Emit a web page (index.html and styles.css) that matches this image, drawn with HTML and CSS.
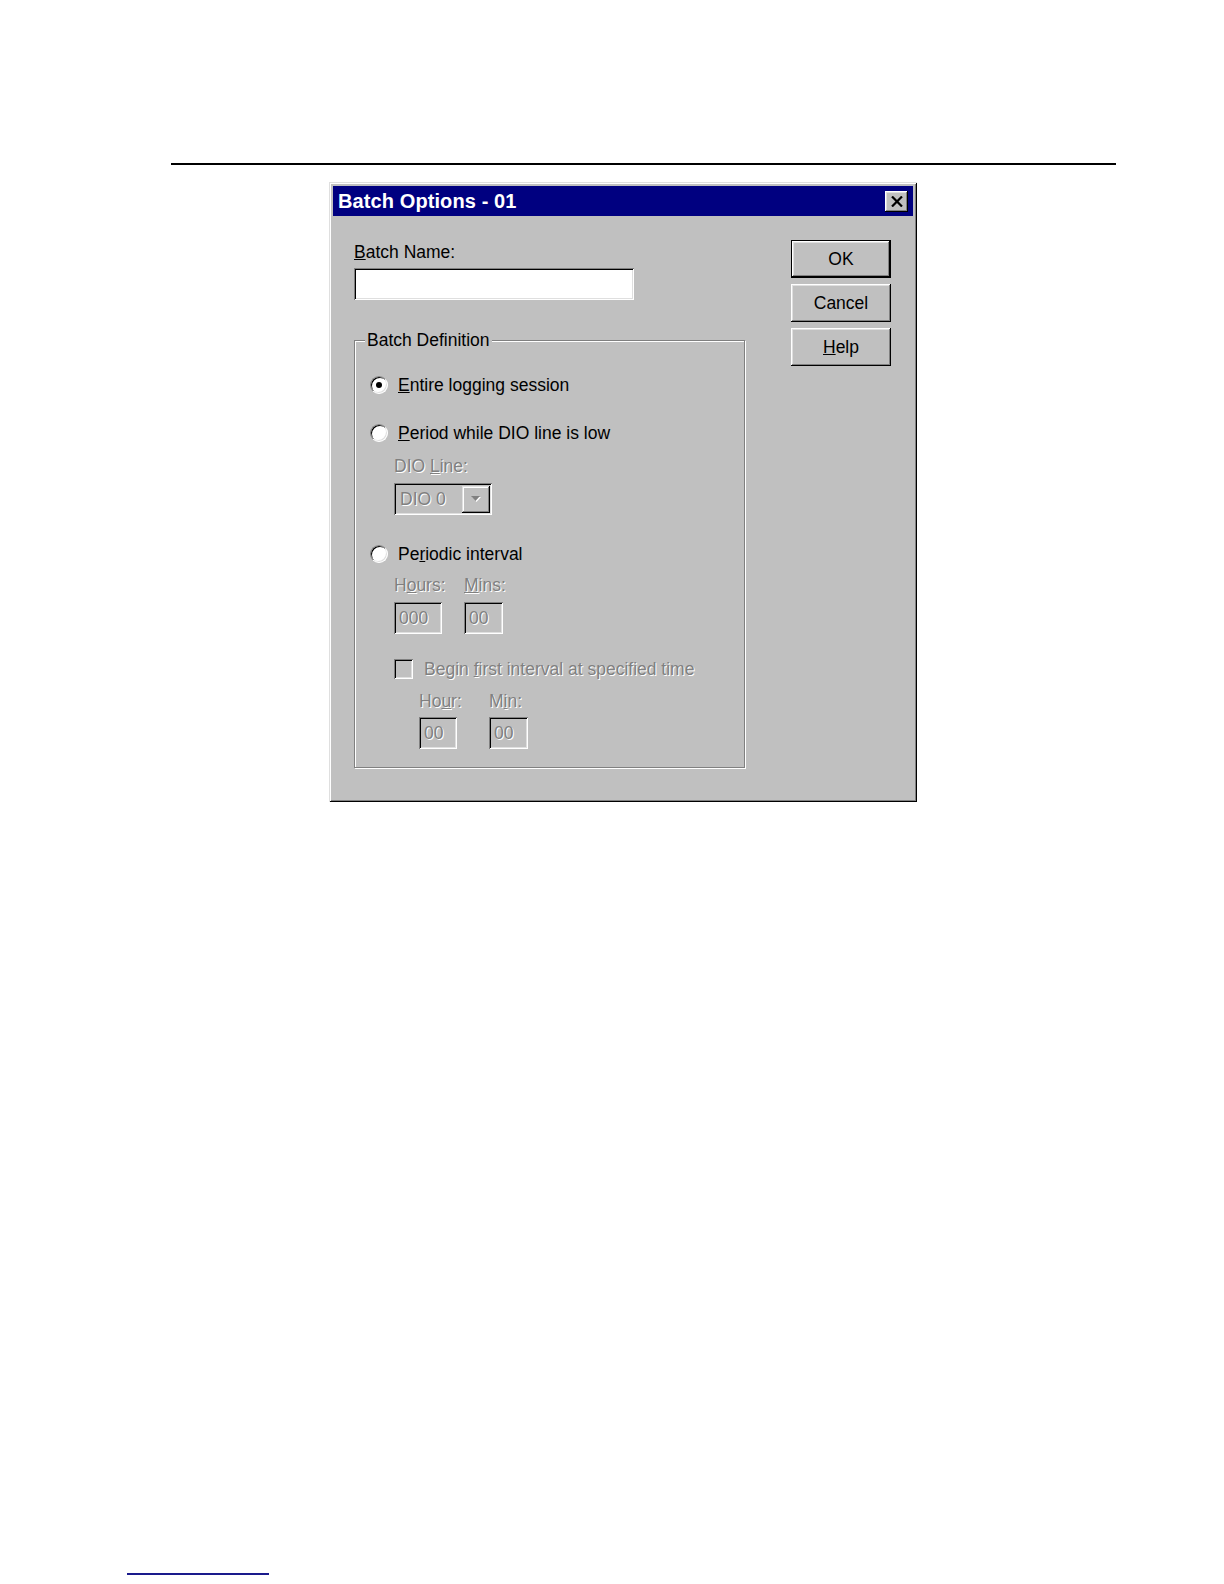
FILE: index.html
```html
<!DOCTYPE html>
<html lang="en">
<head>
<meta charset="utf-8">
<title>Batch Options - 01</title>
<link rel="stylesheet" href="styles.css">
</head>
<body>
<div class="page">
  <div class="rule"></div>

  <div class="dialog">
    <div class="titlebar">
      <span class="title">Batch Options - 01</span>
      <span class="close-btn">
        <svg width="12" height="11" viewBox="0 0 12 11"><path d="M1 0.5 L11 10.5 M11 0.5 L1 10.5" stroke="#000" stroke-width="2.2" fill="none"/></svg>
      </span>
    </div>

    <div class="body">
      <div class="main">
        <div class="lbl"><u>B</u>atch Name:</div>
        <div class="edit"></div>

        <fieldset class="group">
          <legend>Batch Definition</legend>

          <div class="opt-row row-entire">
            <span class="radio checked"></span>
            <span><u>E</u>ntire logging session</span>
          </div>

          <div class="opt-row row-period">
            <span class="radio"></span>
            <span><u>P</u>eriod while DIO line is low</span>
          </div>

          <div class="indent dis lbl-dio">DIO <u>L</u>ine:</div>
          <div class="indent combo">
            <span class="combo-text dis">DIO 0</span>
            <span class="combo-btn">
              <svg width="12" height="8" viewBox="0 0 12 8"><path d="M2 2 H11 L6.5 7 Z" fill="#fff"/><path d="M1 1 H10 L5.5 6 Z" fill="#808080"/></svg>
            </span>
          </div>

          <div class="opt-row row-periodic">
            <span class="radio"></span>
            <span>Pe<u>r</u>iodic interval</span>
          </div>

          <div class="indent timegrid grid-hours">
            <span class="dis">H<u>o</u>urs:</span>
            <span class="dis"><u>M</u>ins:</span>
            <span class="field f-hours dis">000</span>
            <span class="field f-mins dis">00</span>
          </div>

          <div class="indent check-row">
            <span class="check"></span>
            <span class="dis">Begin <u>f</u>irst interval at specified time</span>
          </div>

          <div class="indent2 timegrid grid-hour">
            <span class="dis">Ho<u>u</u>r:</span>
            <span class="dis">M<u>i</u>n:</span>
            <span class="field f-hour dis">00</span>
            <span class="field f-min dis">00</span>
          </div>
        </fieldset>
      </div>

      <div class="buttons">
        <div class="btn default">OK</div>
        <div class="btn">Cancel</div>
        <div class="btn"><u>H</u>elp</div>
      </div>
    </div>
  </div>

  <div class="footline"></div>
</div>
</body>
</html>
```

FILE: styles.css
```css
html, body {
  margin: 0;
  padding: 0;
  background: #ffffff;
  overflow: hidden;
}

.page {
  width: 1224px;
  height: 1584px;
  overflow: hidden;
  padding-top: 163px;
  box-sizing: border-box;
  font-family: "Liberation Sans", Arial, sans-serif;
  font-size: 17.5px;
  color: #000;
}

.rule {
  margin-left: 171px;
  width: 945px;
  height: 2px;
  background: #000;
}

/* ---------- dialog window ---------- */
.dialog {
  margin: 17px 0 0 329px;
  width: 588px;
  box-sizing: border-box;
  padding: 4px;
  background: #c0c0c0;
  box-shadow:
    inset 1px 1px 0 #dfdfdf,
    inset -1px -1px 0 #000,
    inset 2px 2px 0 #ffffff,
    inset -2px -2px 0 #808080;
}

.titlebar {
  height: 30px;
  background: #000080;
  display: flex;
  align-items: center;
  justify-content: space-between;
  padding: 0 5px 0 5px;
}

.title {
  color: #fff;
  font-weight: bold;
  font-size: 20px;
  letter-spacing: 0.1px;
}

.close-btn {
  width: 23px;
  height: 21px;
  background: #c0c0c0;
  display: flex;
  align-items: center;
  justify-content: center;
  box-shadow:
    inset -1px -1px 0 #000,
    inset 1px 1px 0 #fff,
    inset -2px -2px 0 #808080,
    inset 2px 2px 0 #dfdfdf;
}

.body {
  display: flex;
  padding: 24px 0 30px 21px;
}

.main {
  width: 391px;
  margin-top: 2px;
}

.lbl {
  line-height: 20px;
  height: 20px;
}

.edit {
  margin-top: 6px;
  width: 280px;
  height: 32px;
  background: #fff;
  box-shadow:
    inset 1px 1px 0 #808080,
    inset -1px -1px 0 #fff,
    inset 2px 2px 0 #000,
    inset -2px -2px 0 #dfdfdf;
}

/* ---------- group box ---------- */
.group {
  margin: 30px 0 0 0;
  width: 391px;
  box-sizing: border-box;
  min-width: 0;
  padding: 0 0 18px 15px;
  border: 1px solid #808080;
  box-shadow: inset 1px 1px 0 #fff, 1px 1px 0 #fff;
}

.group legend {
  margin-left: -5px;
  padding: 0 2px;
  line-height: 20px;
  background: #c0c0c0;
}

.opt-row {
  display: flex;
  align-items: center;
  gap: 10px;
  height: 20px;
  line-height: 20px;
}

.row-entire { margin-top: 25px; }
.row-period { margin-top: 28px; }
.row-periodic { margin-top: 29px; }

.radio {
  position: relative;
  width: 18px;
  height: 18px;
  flex: none;
  box-sizing: border-box;
  border-radius: 50%;
  background: #fff;
  border: 1px solid;
  border-color: #808080 #fff #fff #808080;
  box-shadow: inset 1px 1px 0 #000, inset -1px -1px 0 #dfdfdf;
}

.radio.checked::after {
  content: "";
  position: absolute;
  left: 5px;
  top: 5px;
  width: 6px;
  height: 6px;
  border-radius: 50%;
  background: #000;
}

.indent { margin-left: 24px; }
.indent2 { margin-left: 49px; }

.dis {
  color: #808080;
  text-shadow: 1px 1px 0 #fff;
}

.lbl-dio {
  margin-top: 13px;
  line-height: 20px;
  height: 20px;
}

.combo {
  margin-top: 7px;
  width: 98px;
  height: 32px;
  box-sizing: border-box;
  display: flex;
  align-items: center;
  justify-content: space-between;
  padding: 0 2px 0 6px;
  box-shadow:
    inset 1px 1px 0 #808080,
    inset -1px -1px 0 #fff,
    inset 2px 2px 0 #000,
    inset -2px -2px 0 #dfdfdf;
}

.combo-btn {
  width: 28px;
  height: 27px;
  display: flex;
  align-items: center;
  justify-content: center;
  background: #c0c0c0;
  box-shadow:
    inset -1px -1px 0 #000,
    inset 1px 1px 0 #dfdfdf,
    inset -2px -2px 0 #808080,
    inset 2px 2px 0 #fff;
}

.timegrid {
  display: grid;
  grid-template-columns: 70px auto;
  justify-content: start;
  line-height: 20px;
}

.grid-hours {
  margin-top: 11px;
  row-gap: 7px;
}

.grid-hour {
  margin-top: 12px;
  row-gap: 6px;
}

.field {
  height: 32px;
  box-sizing: border-box;
  padding: 6px 0 0 5px;
  line-height: 20px;
  box-shadow:
    inset 1px 1px 0 #808080,
    inset -1px -1px 0 #fff,
    inset 2px 2px 0 #000,
    inset -2px -2px 0 #dfdfdf;
}

.f-hours { width: 48px; }
.f-mins { width: 39px; }
.f-hour { width: 38px; }
.f-min { width: 39px; }

.check-row {
  margin-top: 25px;
  display: flex;
  align-items: center;
  gap: 11px;
  height: 20px;
  line-height: 20px;
}

.check {
  width: 19px;
  height: 20px;
  flex: none;
  box-shadow:
    inset 1px 1px 0 #808080,
    inset -1px -1px 0 #fff,
    inset 2px 2px 0 #000,
    inset -2px -2px 0 #dfdfdf;
}

/* ---------- buttons ---------- */
.buttons {
  margin-left: 46px;
  display: flex;
  flex-direction: column;
  gap: 6px;
}

.btn {
  width: 100px;
  height: 38px;
  box-sizing: border-box;
  display: flex;
  align-items: center;
  justify-content: center;
  background: #c0c0c0;
  box-shadow:
    inset -1px -1px 0 #000,
    inset 1px 1px 0 #fff,
    inset -2px -2px 0 #808080,
    inset 2px 2px 0 #dfdfdf;
}

.btn.default {
  border: 1px solid #000;
}

.footline {
  margin: 771px 0 0 127px;
  width: 142px;
  height: 2px;
  background: #1a1a8c;
}
```
